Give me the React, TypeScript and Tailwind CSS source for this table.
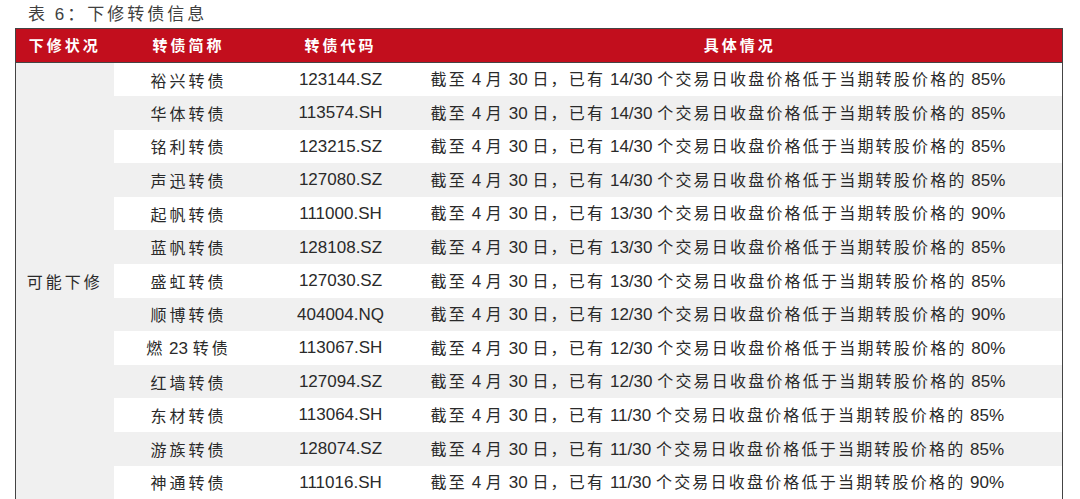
const ROWS: [string, string, string, string][] = [
  ["裕兴转债", "123144.SZ", "14/30", "85%"],
  ["华体转债", "113574.SH", "14/30", "85%"],
  ["铭利转债", "123215.SZ", "14/30", "85%"],
  ["声迅转债", "127080.SZ", "14/30", "85%"],
  ["起帆转债", "111000.SH", "13/30", "90%"],
  ["蓝帆转债", "128108.SZ", "13/30", "85%"],
  ["盛虹转债", "127030.SZ", "13/30", "85%"],
  ["顺博转债", "404004.NQ", "12/30", "90%"],
  ["燃 23 转债", "113067.SH", "12/30", "80%"],
  ["红墙转债", "127094.SZ", "12/30", "85%"],
  ["东材转债", "113064.SH", "11/30", "85%"],
  ["游族转债", "128074.SZ", "11/30", "85%"],
  ["神通转债", "111016.SH", "11/30", "90%"],
];

const CJK = "font-['Noto_Sans_CJK_SC',sans-serif]";
const NUM = "font-['Liberation_Sans','Noto_Sans_CJK_SC',sans-serif]";

function Name({ text }: { text: string }) {
  // "燃 23 转债" has digits that should not be letter-spaced
  const m = text.match(/^(\S+) (\d+) (\S+)$/);
  if (!m) return <span className="tracking-[3px]">{text}</span>;
  return (
    <span>
      <span className="tracking-[2px]">{m[1]}</span>
      <span className={`${NUM} text-[17px]`}> {m[2]} </span>
      <span className="tracking-[3px]">{m[3]}</span>
    </span>
  );
}

function Detail({ days, pct }: { days: string; pct: string }) {
  return (
    <span className="whitespace-nowrap">
      <span className="tracking-[2.2px]">截至</span>
      <span className={`${NUM} text-[17px]`}> 4 </span>
      <span className="tracking-[2.2px]">月</span>
      <span className={`${NUM} text-[17px]`}> 30 </span>
      <span className="tracking-[2.2px]">日，已有</span>
      <span className={`${NUM} text-[17px]`}> {days} </span>
      <span className="tracking-[2.2px]">个交易日收盘价格低于当期转股价格的</span>
      <span className={`${NUM} text-[17px]`}> {pct}</span>
    </span>
  );
}

export default function App() {
  return (
    <div className={`w-[1080px] h-[499px] overflow-hidden bg-white ${CJK}`}>
      <div className="h-[28px] pl-[28px] pt-[1px] text-[17px] leading-[24px] text-[#404040] tracking-[3px]">
        表 <span className={NUM}>6</span>：下修转债信息
      </div>
      <table className="ml-[15px] w-[1048px] border-collapse table-fixed">
        <colgroup>
          <col className="w-[98px]" />
          <col className="w-[150px]" />
          <col className="w-[154px]" />
          <col />
        </colgroup>
        <thead>
          <tr className="h-[34px] bg-[#c20e1d] text-white text-[15px] font-bold tracking-[3px]">
            <th className="border border-[#444] border-r-0 font-bold">下修状况</th>
            <th className="border-y border-[#444] font-bold">转债简称</th>
            <th className="border-y border-[#444] font-bold">转债代码</th>
            <th className="border border-[#444] border-l-0 font-bold">具体情况</th>
          </tr>
        </thead>
        <tbody className="text-[16px] text-[#2a2a2a]">
          {ROWS.map(([name, code, days, pct], i) => (
            <tr key={code} className={`h-[33.6px] ${i % 2 === 1 ? "bg-[#f0f0f0]" : "bg-white"}`}>
              {i === 0 && (
                <td rowSpan={13} className="border-l border-[#444] bg-[#f0f0f0] text-center align-middle tracking-[3px]">
                  可能下修
                </td>
              )}
              <td className="text-center p-0">
                <Name text={name} />
              </td>
              <td className={`text-center ${NUM} text-[17px] p-0`}>{code}</td>
              <td className="border-r border-[#444] pl-[13px] p-0">
                <Detail days={days} pct={pct} />
              </td>
            </tr>
          ))}
        </tbody>
      </table>
    </div>
  );
}
